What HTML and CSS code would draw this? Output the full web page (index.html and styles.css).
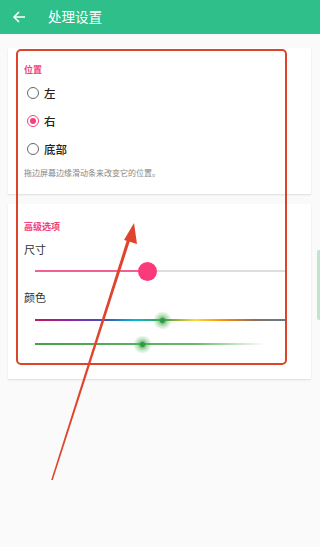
FILE: index.html
```html
<!DOCTYPE html>
<html lang="zh-CN">
<head>
  <meta charset="UTF-8" />
  <meta name="viewport" content="width=device-width, initial-scale=1.0"/>
  <title>处理设置</title>
  <link rel="stylesheet" href="styles.css">
</head>
<body>

  <!-- 顶部栏 -->
  <div class="toolbar">
    <svg class="back" width="14" height="14" viewBox="0 0 14 14">
      <path d="M13 7H2M7 2L2 7l5 5" fill="none" stroke="#fff" stroke-width="1.6"/>
    </svg>
    <span class="toolbar-title">处理设置</span>
  </div>

  <div class="page">
    <!-- 位置 -->
    <div class="card card-pos">
      <p class="section-title">位置</p>
      <div class="radio-row"><span class="radio"></span><span>左</span></div>
      <div class="radio-row"><span class="radio checked"></span><span>右</span></div>
      <div class="radio-row"><span class="radio"></span><span>底部</span></div>
      <p class="hint">拖边屏幕边缘滑动条来改变它的位置。</p>
    </div>

    <!-- 高级选项 -->
    <div class="card card-adv">
      <p class="section-title">高级选项</p>
      <p class="label label-size">尺寸</p>
      <div class="slider slider-size">
        <div class="track"><div class="fill" style="width:45%"></div></div>
        <span class="thumb-big" style="left:45%"></span>
      </div>
      <p class="label label-color">颜色</p>
      <div class="slider slider-hue">
        <div class="track rainbow"></div>
        <span class="thumb-glow" style="left:51%"></span>
      </div>
      <div class="slider slider-green">
        <div class="track green"></div>
        <span class="thumb-glow" style="left:43%"></span>
      </div>
    </div>
  </div>

  <div class="scrollbar"></div>

  <!-- 标注 -->
  <div class="mark-box"></div>
  <svg class="mark-arrow" width="320" height="547" viewBox="0 0 320 547">
    <polygon points="51.2,480 52.8,480 131.5,236 128.5,235" fill="#e0442c"/>
    <polygon points="134,223 124,240 137,244" fill="#e0442c"/>
  </svg>

</body>
</html>
```

FILE: styles.css
```css
body {
  margin: 0;
  width: 320px;
  height: 547px;
  overflow: hidden;
  position: relative;
  background-color: #fafafa;
  font-family: "Noto Sans CJK SC", "Noto Sans", sans-serif;
  color: #333;
}

p {
  margin: 0;
}

.toolbar {
  height: 34px;
  background-color: #2ebf8b;
  display: flex;
  align-items: center;
  padding-left: 12px;
}

.back {
  display: block;
}

.toolbar-title {
  color: white;
  font-size: 13.5px;
  margin-left: 22px;
  line-height: 1;
}

.page {
  padding: 14px 9px 0 8px;
}

.card {
  background: white;
  box-shadow: 0 1px 2px rgba(0, 0, 0, 0.12);
  border-radius: 1px;
}

.card-pos {
  padding: 17px 0 15px 16px;
}

.card-adv {
  margin-top: 10px;
  padding: 18px 0 25px 16px;
}

.section-title {
  font-size: 9px;
  line-height: 10px;
  font-weight: bold;
  color: #f2407d;
}

.card-pos .section-title {
  margin-bottom: 4px;
}

.radio-row {
  height: 28px;
  display: flex;
  align-items: center;
  font-size: 11.5px;
  font-weight: 500;
  color: #222;
  padding-left: 3px;
}

.radio {
  width: 10px;
  height: 10px;
  border: 1.6px solid #666;
  border-radius: 50%;
  margin-right: 5px;
  position: relative;
}

.radio.checked {
  border-color: #f2407d;
}

.radio.checked::after {
  content: "";
  position: absolute;
  left: 2px;
  top: 2px;
  width: 6px;
  height: 6px;
  border-radius: 50%;
  background: #f2407d;
}

.hint {
  margin-top: 4px;
  font-size: 8px;
  line-height: 12px;
  color: #888;
}

.label {
  font-size: 11px;
  line-height: 14px;
  color: #333;
}

.label-size {
  margin-top: 10px;
}

.label-color {
  margin-top: 9px;
}

.slider {
  position: relative;
  height: 20px;
  width: 250px;
  margin-left: 11px;
}

.slider-size {
  margin-top: 5px;
}

.slider-hue {
  margin-top: 6px;
}

.slider-green {
  margin-top: 4px;
}

.track {
  position: absolute;
  left: 0;
  right: 0;
  top: 9px;
  height: 1.5px;
  background: #ddd;
}

.fill {
  height: 100%;
  background: #f06292;
}

.rainbow {
  background: linear-gradient(to right, #c2185b 0%, #8e24aa 14%, #3f51b5 28%, #00bcd4 40%, #43a047 52%, #fdd835 64%, #fb8c00 76%, #8d6e63 88%, #607d8b 100%);
}

.green {
  right: 20px;
  background: linear-gradient(to right, #43a047 0%, #66bb6a 70%, rgba(102, 187, 106, 0) 100%);
}

.thumb-big {
  position: absolute;
  top: 0.5px;
  width: 19px;
  height: 19px;
  margin-left: -9.5px;
  border-radius: 50%;
  background: #fc3a79;
}

.thumb-glow {
  position: absolute;
  top: 1px;
  width: 19px;
  height: 19px;
  margin-left: -9.5px;
  border-radius: 50%;
  background: radial-gradient(circle, #2e9a49 0 2px, rgba(76, 175, 80, 0.6) 3.5px, rgba(76, 175, 80, 0.3) 6px, rgba(76, 175, 80, 0) 9.5px);
}

.scrollbar {
  position: absolute;
  right: 0;
  top: 250px;
  width: 3px;
  height: 70px;
  border-radius: 2px 0 0 2px;
  background: #bfe6cc;
}

.mark-box {
  position: absolute;
  left: 16px;
  top: 49px;
  width: 267px;
  height: 312px;
  border: 2.5px solid #dc4329;
  border-radius: 5px;
}

.mark-arrow {
  position: absolute;
  left: 0;
  top: 0;
  pointer-events: none;
}
```
